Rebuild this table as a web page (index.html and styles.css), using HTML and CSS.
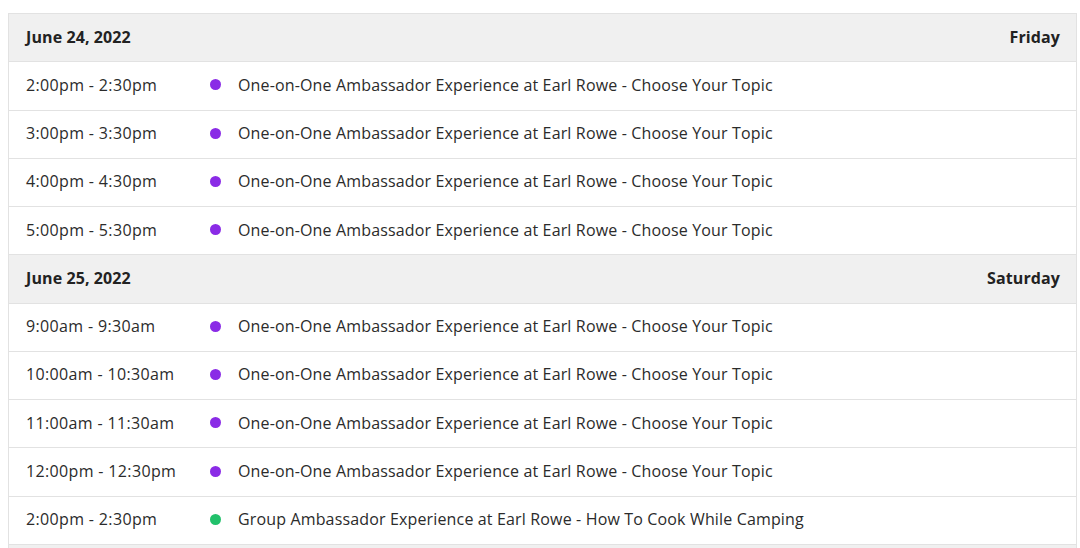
FILE: index.html
```html
<!DOCTYPE html>
<html lang="en">
<head>
<meta charset="utf-8">
<title>Schedule</title>
<link rel="stylesheet" href="styles.css">
</head>
<body>
<div class="schedule">
  <div class="day-head"><span class="date">June 24, 2022</span><span class="weekday">Friday</span></div>
  <div class="row"><span class="time">2:00pm - 2:30pm</span><span class="dot purple"></span><span class="title">One-on-One Ambassador Experience at Earl Rowe - Choose Your Topic</span></div>
  <div class="row"><span class="time">3:00pm - 3:30pm</span><span class="dot purple"></span><span class="title">One-on-One Ambassador Experience at Earl Rowe - Choose Your Topic</span></div>
  <div class="row"><span class="time">4:00pm - 4:30pm</span><span class="dot purple"></span><span class="title">One-on-One Ambassador Experience at Earl Rowe - Choose Your Topic</span></div>
  <div class="row"><span class="time">5:00pm - 5:30pm</span><span class="dot purple"></span><span class="title">One-on-One Ambassador Experience at Earl Rowe - Choose Your Topic</span></div>
  <div class="day-head"><span class="date">June 25, 2022</span><span class="weekday">Saturday</span></div>
  <div class="row"><span class="time">9:00am - 9:30am</span><span class="dot purple"></span><span class="title">One-on-One Ambassador Experience at Earl Rowe - Choose Your Topic</span></div>
  <div class="row"><span class="time">10:00am - 10:30am</span><span class="dot purple"></span><span class="title">One-on-One Ambassador Experience at Earl Rowe - Choose Your Topic</span></div>
  <div class="row"><span class="time">11:00am - 11:30am</span><span class="dot purple"></span><span class="title">One-on-One Ambassador Experience at Earl Rowe - Choose Your Topic</span></div>
  <div class="row"><span class="time">12:00pm - 12:30pm</span><span class="dot purple"></span><span class="title">One-on-One Ambassador Experience at Earl Rowe - Choose Your Topic</span></div>
  <div class="row"><span class="time">2:00pm - 2:30pm</span><span class="dot green"></span><span class="title">Group Ambassador Experience at Earl Rowe - How To Cook While Camping</span></div>
  <div class="day-head"></div>
</div>
</body>
</html>
```

FILE: styles.css
```css
html, body {
  margin: 0;
  padding: 0;
  background: #ffffff;
}
body {
  padding: 13px 0 0 8px;
  font-family: "Open Sans", "Noto Sans", sans-serif;
  color: #2b2b2b;
  font-size: 16px;
}
.schedule {
  width: 1067px;
  border: 1px solid #e2e2e2;
  border-bottom: none;
}
.day-head, .row {
  display: flex;
  align-items: center;
  box-sizing: border-box;
  height: 48.27px;
  padding: 0 16px 2px 17px;
  border-bottom: 1px solid #e2e2e2;
}
.day-head {
  background: #f0f0f0;
  font-weight: 700;
  justify-content: space-between;
  color: #222;
  letter-spacing: 0.1px;
}
.row {
  background: #fff;
  letter-spacing: 0.15px;
}
.time {
  width: 184px;
  flex: none;
  letter-spacing: 0.35px;
}
.dot {
  width: 11px;
  height: 11px;
  border-radius: 50%;
  flex: none;
  margin-right: 17px;
}
.purple { background: #8a2be6; }
.green { background: #22c16b; }
```
